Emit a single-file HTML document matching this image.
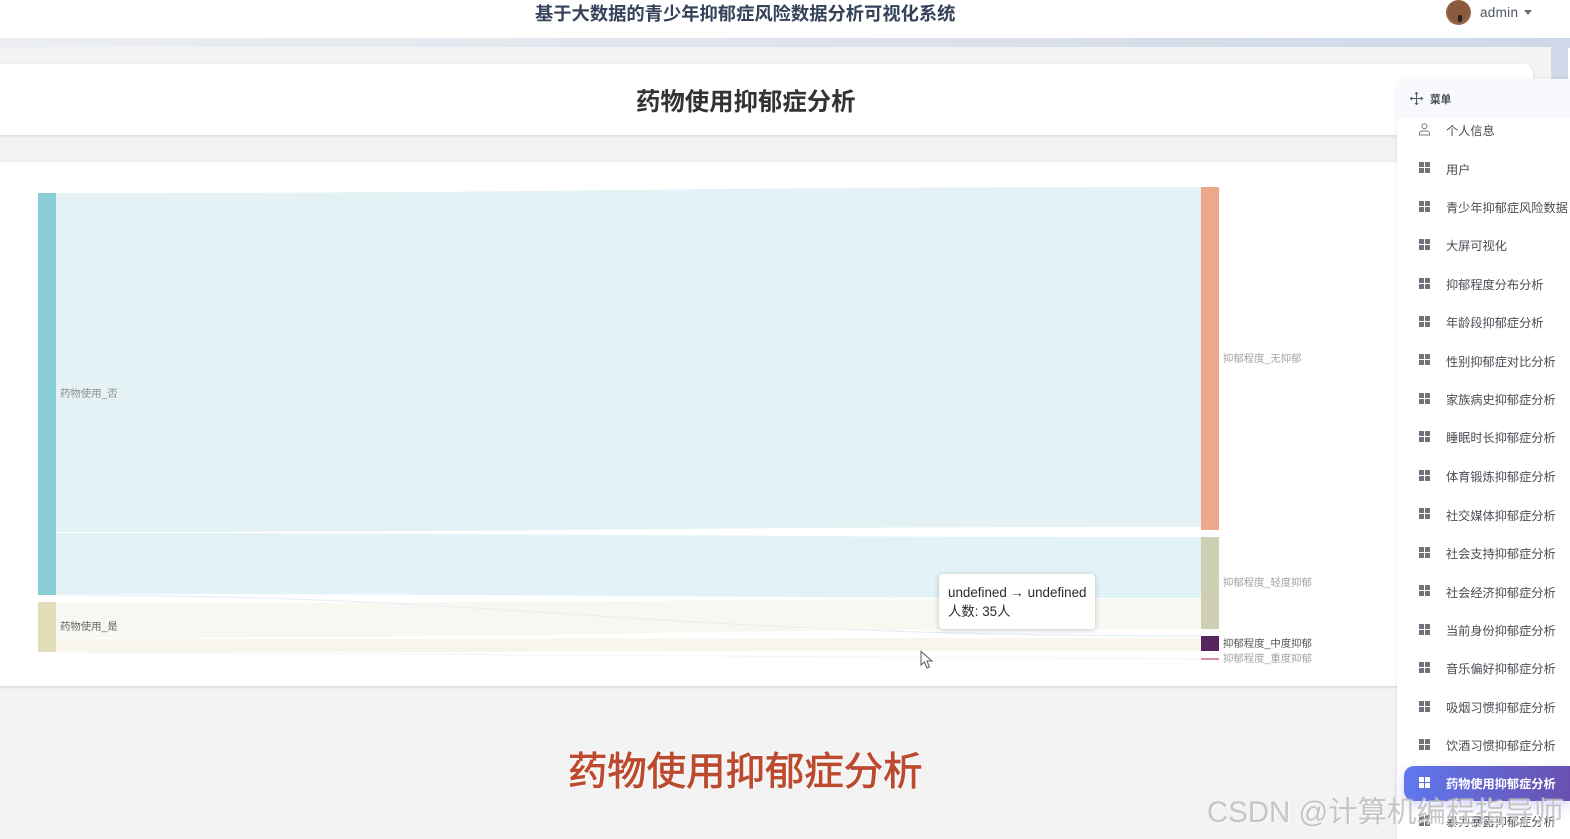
<!DOCTYPE html>
<html><head><meta charset="utf-8"><style>
*{box-sizing:border-box}
html,body{margin:0;padding:0;width:1570px;height:839px;overflow:hidden;background:#fff;font-family:"Liberation Sans","Noto Sans CJK SC",sans-serif}
.a{position:absolute}
.t{position:absolute;white-space:nowrap;line-height:1}
.m{position:absolute;left:1446px;font-size:12.2px;color:#4a4d54;white-space:nowrap;line-height:14px}
.i{position:absolute;left:1419px;width:11px;height:11px}
.i b{position:absolute;width:4.8px;height:4.8px;background:#6f727a;border-radius:.5px}
.i b:nth-child(1){left:0;top:0}.i b:nth-child(2){left:6.2px;top:0}.i b:nth-child(3){left:0;top:6.2px}.i b:nth-child(4){left:6.2px;top:6.2px}
.lb{font-size:10.4px;color:#a3a3a3}
</style></head><body>
<div class="a" style="left:0;top:38px;width:1570px;height:10px;background:linear-gradient(90deg,#eceef2,#e0e5ee 45%,#ced8e8)"></div>
<div class="a" style="left:1551px;top:46px;width:17px;height:40px;background:#ced8e8"></div>
<div class="a" style="left:0;top:47px;width:1551px;height:792px;background:#f3f3f3"></div>
<div class="t" style="left:535px;top:5px;font-size:18.3px;font-weight:700;color:#35425a">基于大数据的青少年抑郁症风险数据分析可视化系统</div>
<div class="a" style="left:1446px;top:0;width:25px;height:25px;border-radius:50%;background:radial-gradient(circle at 50% 45%,#8b5a3c 55%,#b98a6c 100%);overflow:hidden"><div class="a" style="left:12px;top:15px;width:4px;height:7px;background:#2a2320;border-radius:2px"></div></div>
<div class="t" style="left:1480px;top:6px;font-size:13.5px;color:#4e5560;letter-spacing:.3px">admin</div>
<div class="a" style="left:1524px;top:10px;width:0;height:0;border-left:4px solid transparent;border-right:4px solid transparent;border-top:5px solid #6c7078"></div>

<div class="a" style="left:0;top:64px;width:1533px;height:71px;background:#fff;border-radius:0 10px 0 0;box-shadow:0 1px 3px rgba(0,0,0,.12)"></div>
<div class="t" style="left:636px;top:91px;font-size:24.4px;font-weight:700;color:#333">药物使用抑郁症分析</div>

<div class="a" style="left:0;top:162px;width:1533px;height:524px;background:#fff;box-shadow:0 1px 3px rgba(0,0,0,.14)"></div>
<svg class="a" style="left:0;top:0" width="1400" height="700" viewBox="0 0 1400 700">
<path d="M56 193C628 193 628 187 1201 187L1201 527C628 527 628 532 56 532Z" fill="#e4f2f5"/>
<path d="M56 533C628 533 628 537 1201 537L1201 598C628 598 628 594 56 594Z" fill="#e1f3f6"/>
<path d="M56 603C628 603 628 599 1201 599L1201 629C628 629 628 638 56 638Z" fill="#f8f8f2"/>
<path d="M56 639C628 639 628 638 1201 638L1201 651C628 651 628 652 56 652Z" fill="#f8f6ec"/>
<path d="M56 595C520 595 640 636 1201 636" fill="none" stroke="#e4f1f3" stroke-width="1.2"/>
<path d="M56 652C628 652 628 659 1201 659" fill="none" stroke="#f6f5ef" stroke-width="1"/>
<rect x="38" y="193" width="18" height="402" fill="#89cdd7"/>
<rect x="38" y="602" width="18" height="50" fill="#e2deba"/>
<rect x="1201" y="187" width="18" height="343" fill="#eda88c"/>
<rect x="1201" y="537" width="18" height="92" fill="#cfcfb5"/>
<rect x="1201" y="636" width="18" height="15" fill="#56265f"/>
<rect x="1201" y="658" width="18" height="2" fill="#dc8ba0"/>
</svg>
<div class="t lb" style="left:60px;top:390px;color:#8f8f8f">药物使用_否</div>
<div class="t lb" style="left:60px;top:623px;color:#666">药物使用_是</div>
<div class="t lb" style="left:1223px;top:355px">抑郁程度_无抑郁</div>
<div class="t lb" style="left:1223px;top:579px">抑郁程度_轻度抑郁</div>
<div class="t lb" style="left:1223px;top:640px;color:#555">抑郁程度_中度抑郁</div>
<div class="t lb" style="left:1223px;top:655px">抑郁程度_重度抑郁</div>

<div class="a" style="left:939px;top:574px;width:156px;height:55px;background:#fff;border-radius:4px;box-shadow:0 1px 6px rgba(0,0,0,.22)"></div>
<div class="t" style="left:948px;top:586px;font-size:13.4px;color:#2b2b2b">undefined → undefined</div>
<div class="t" style="left:948px;top:605px;font-size:13.4px;color:#2b2b2b">人数: 35人</div>
<svg class="a" style="left:919px;top:650px" width="16" height="20" viewBox="0 0 16 20"><path d="M2 1.5V15L5.5 12 8 18 10.5 17 8 11H13Z" fill="#fff" stroke="#55595f" stroke-width="1"/></svg>

<div class="t" style="left:568px;top:753px;font-size:39.4px;font-weight:400;color:#bb4a2e;text-shadow:0 0 3px #fff,0 0 3px #fff,0 0 2px #fff;-webkit-text-stroke:.8px #bb4a2e">药物使用抑郁症分析</div>

<div class="a" style="left:1397px;top:79px;width:173px;height:760px;background:#fff;border-radius:10px 0 0 0;box-shadow:-1px 0 5px rgba(0,0,0,.06)"></div>
<div class="a" style="left:1397px;top:79px;width:173px;height:39px;background:#f7f9fc;border-radius:10px 0 0 0"></div>
<svg class="a" style="left:1410px;top:92px" width="13" height="13" viewBox="0 0 13 13" fill="none" stroke="#555b64" stroke-width="1"><path d="M6.5 0.5V12.5M0.5 6.5H12.5M5 2L6.5 .5 8 2M5 11L6.5 12.5 8 11M2 5L.5 6.5 2 8M11 5L12.5 6.5 11 8"/></svg>
<div class="t" style="left:1430px;top:95px;font-size:10.6px;color:#444a52;font-weight:700">菜单</div>
<svg class="a" style="left:1419px;top:123px" width="11" height="13" viewBox="0 0 11 13" fill="none" stroke="#777b82" stroke-width="1"><circle cx="5.5" cy="3.2" r="2.5"/><path d="M.5 12V10.5C.5 8.8 2 8 3.5 8H7.5C9 8 10.5 8.8 10.5 10.5V12Z"/></svg>
<div class="m" style="top:124px">个人信息</div>
<div class="i" style="top:162px"><b></b><b></b><b></b><b></b></div><div class="m" style="top:163px">用户</div>
<div class="i" style="top:201px"><b></b><b></b><b></b><b></b></div><div class="m" style="top:201px">青少年抑郁症风险数据</div>
<div class="i" style="top:239px"><b></b><b></b><b></b><b></b></div><div class="m" style="top:239px">大屏可视化</div>
<div class="i" style="top:278px"><b></b><b></b><b></b><b></b></div><div class="m" style="top:278px">抑郁程度分布分析</div>
<div class="i" style="top:316px"><b></b><b></b><b></b><b></b></div><div class="m" style="top:316px">年龄段抑郁症分析</div>
<div class="i" style="top:354px"><b></b><b></b><b></b><b></b></div><div class="m" style="top:355px">性别抑郁症对比分析</div>
<div class="i" style="top:393px"><b></b><b></b><b></b><b></b></div><div class="m" style="top:393px">家族病史抑郁症分析</div>
<div class="i" style="top:431px"><b></b><b></b><b></b><b></b></div><div class="m" style="top:431px">睡眠时长抑郁症分析</div>
<div class="i" style="top:470px"><b></b><b></b><b></b><b></b></div><div class="m" style="top:470px">体育锻炼抑郁症分析</div>
<div class="i" style="top:508px"><b></b><b></b><b></b><b></b></div><div class="m" style="top:509px">社交媒体抑郁症分析</div>
<div class="i" style="top:547px"><b></b><b></b><b></b><b></b></div><div class="m" style="top:547px">社会支持抑郁症分析</div>
<div class="i" style="top:585px"><b></b><b></b><b></b><b></b></div><div class="m" style="top:586px">社会经济抑郁症分析</div>
<div class="i" style="top:624px"><b></b><b></b><b></b><b></b></div><div class="m" style="top:624px">当前身份抑郁症分析</div>
<div class="i" style="top:662px"><b></b><b></b><b></b><b></b></div><div class="m" style="top:662px">音乐偏好抑郁症分析</div>
<div class="i" style="top:701px"><b></b><b></b><b></b><b></b></div><div class="m" style="top:701px">吸烟习惯抑郁症分析</div>
<div class="i" style="top:739px"><b></b><b></b><b></b><b></b></div><div class="m" style="top:739px">饮酒习惯抑郁症分析</div>
<div class="a" style="left:1404px;top:766px;width:166px;height:35px;border-radius:10px 0 0 10px;background:linear-gradient(90deg,#5f78ee,#6a50b0);box-shadow:0 5px 12px rgba(100,90,230,.25)"></div>
<div class="i" style="top:777px"><b style="background:#fff"></b><b style="background:#fff"></b><b style="background:#fff"></b><b style="background:#fff"></b></div><div class="m" style="top:777px;color:#fff;font-weight:700">药物使用抑郁症分析</div>
<div class="i" style="top:815px"><b></b><b></b><b></b><b></b></div><div class="m" style="top:815px">暴力暴露抑郁症分析</div>

<div class="t" style="left:1207px;top:798px;font-size:29.4px;color:rgba(178,178,178,.72);text-shadow:1px 1px 1px rgba(255,255,255,.8)">CSDN @计算机编程指导师</div>
</body></html>
